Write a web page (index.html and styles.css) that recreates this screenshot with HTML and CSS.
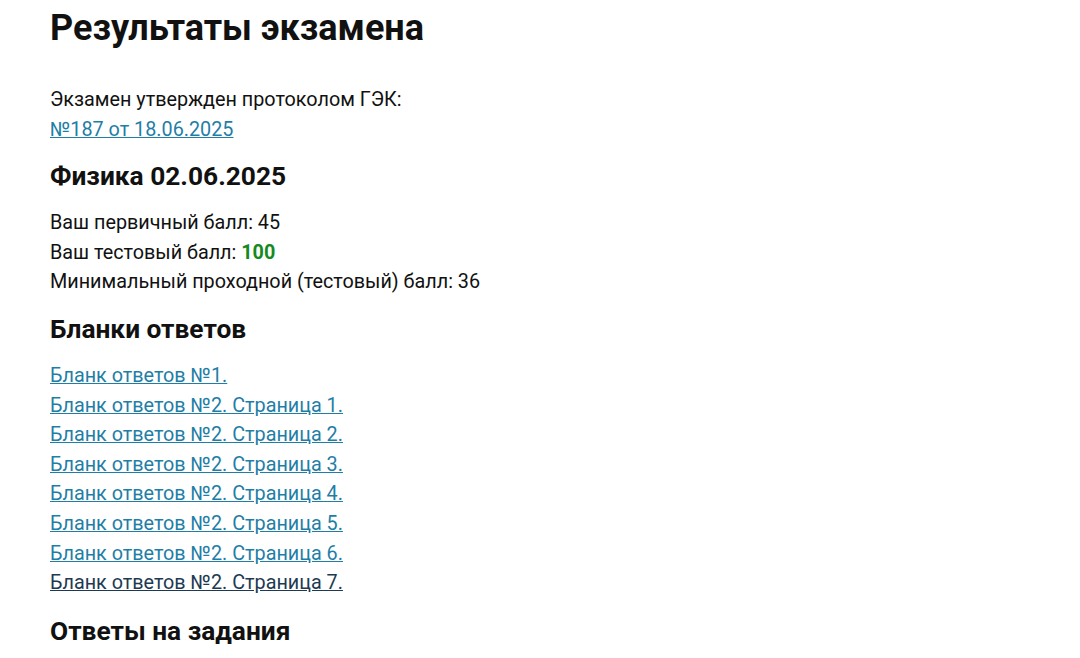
FILE: index.html
```html
<!DOCTYPE html>
<html lang="ru">
  <head>
    <meta charset="UTF-8" />
    <title>Результаты экзамена</title>
    <link rel="stylesheet" href="styles.css">
  </head>
  <body>
    <div class="results">
      <h1>Результаты экзамена</h1>

      <div class="protocol">
        Экзамен утвержден протоколом ГЭК:<br />
        <a href="#">№187 от 18.06.2025</a>
      </div>

      <h2>Физика 02.06.2025</h2>
      <div class="scores">
        Ваш первичный балл: 45<br />
        Ваш тестовый балл: <span class="score-good">100</span><br />
        Минимальный проходной (тестовый) балл: 36
      </div>

      <h2>Бланки ответов</h2>
      <div class="blanks">
        <a href="#">Бланк ответов №1.</a><br />
        <a href="#">Бланк ответов №2. Страница 1.</a><br />
        <a href="#">Бланк ответов №2. Страница 2.</a><br />
        <a href="#">Бланк ответов №2. Страница 3.</a><br />
        <a href="#">Бланк ответов №2. Страница 4.</a><br />
        <a href="#">Бланк ответов №2. Страница 5.</a><br />
        <a href="#">Бланк ответов №2. Страница 6.</a><br />
        <a href="#" class="visited">Бланк ответов №2. Страница 7.</a>
      </div>

      <h2>Ответы на задания</h2>
    </div>
  </body>
</html>
```

FILE: styles.css
```css
body {
  font-family: Roboto, "Noto Sans", sans-serif;
  margin: 0;
  padding: 0;
  background-color: #ffffff;
  color: #111111;
}
.results {
  padding: 0 50px;
}
h1 {
  font-size: 36px;
  font-weight: bold;
  margin: 0;
  padding-top: 7px;
  line-height: 42px;
  margin-bottom: 36px;
}
h2 {
  font-size: 26.3px;
  font-weight: bold;
  margin: 17px 0 17px;
  line-height: 30px;
}
.protocol,
.scores,
.blanks {
  font-size: 19.8px;
  line-height: 29.6px;
}
.blanks {
  margin-bottom: 18px;
}
a {
  color: #1f7ea6;
  text-decoration: underline;
}
a.visited {
  color: #1d3a52;
}
.score-good {
  color: #158a1e;
  font-weight: bold;
}
```
